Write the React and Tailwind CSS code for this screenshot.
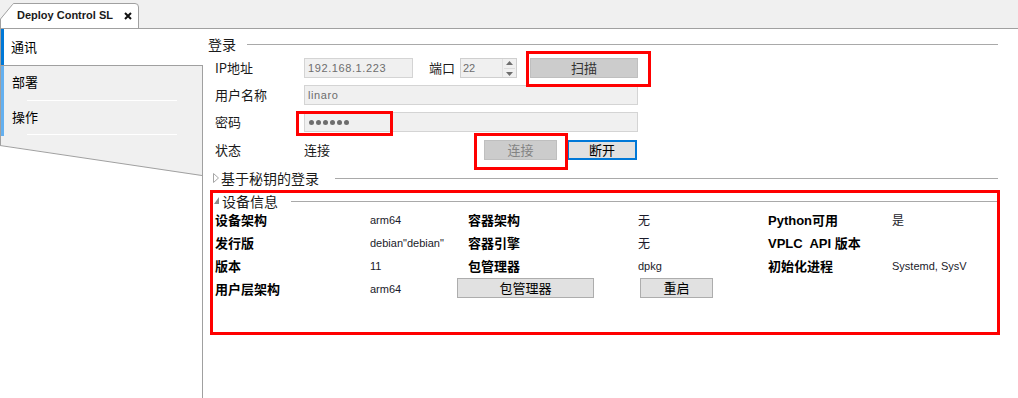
import clsx from 'clsx';

const cjk = "font-['Noto_Sans_CJK_SC','Liberation_Sans',sans-serif]";
const latin = "font-['Liberation_Sans','Noto_Sans_CJK_SC',sans-serif]";

function TopTab() {
  return (
    <div className="relative w-[140px] h-[25px] flex items-center">
      <svg className="absolute inset-0" width="140" height="25" viewBox="0 0 140 25">
        <path d="M0.5 25 L0.5 16 L12.5 1.5 Q13 0.5 14 0.5 L135 0.5 Q138.5 0.5 138.5 4 L138.5 25" fill="#ffffff" stroke="#a0a0a0" />
      </svg>
      <span className={clsx('relative pl-[17px] text-[11px] font-bold whitespace-nowrap text-[#1a1a1a]', latin)}>
        Deploy Control SL
      </span>
      <svg className="relative ml-[11px]" width="8" height="8" viewBox="0 0 8 8">
        <path d="M1 1 L7 7 M7 1 L1 7" stroke="#111" strokeWidth="2" />
      </svg>
    </div>
  );
}

function SideItem({ label, last }) {
  return (
    <div className="flex h-[35px] relative">
      <div className="w-[3px] bg-[#64b0f0]" />
      <div className={clsx('flex items-center pl-[8px] pb-[3px] text-[13px]', cjk)}>{label}</div>
      <div className={clsx('absolute left-[26px] w-[150px] h-px bg-white', last ? 'bottom-[1px]' : 'bottom-[0px]')} />
    </div>
  );
}

function Sidebar() {
  return (
    <div className="w-[203px] flex flex-col">
      <div className="h-[36px] flex border-l border-[#a0a0a0] bg-white">
        <div className="w-[3px] bg-[#0078d7]" />
        <div className={clsx('flex items-center pl-[7px] text-[13px]', cjk)}>通讯</div>
      </div>
      <div className="flex-1 flex flex-col border-r border-[#a0a0a0]">
        <div className="h-[80px] bg-[#f0f0f0] border-t border-l border-[#a0a0a0]">
          <SideItem label="部署" />
          <SideItem label="操作" last />
        </div>
        <svg width="202" height="32" viewBox="0 0 202 32">
          <polygon points="0,0 202,0 202,31" fill="#f0f0f0" />
          <line x1="0" y1="0.5" x2="202" y2="30.5" stroke="#a0a0a0" />
        </svg>
      </div>
    </div>
  );
}

function GroupHead({ title, marker, lineEnd }) {
  return (
    <div className="flex items-center h-[16px]">
      <div className="w-[9px] flex justify-start pl-[1px]">
        {marker === 'closed' && (
          <svg width="6" height="10" viewBox="0 0 6 10">
            <path d="M0.5 0.5 L5.5 5 L0.5 9.5 Z" fill="none" stroke="#a6a6a6" />
          </svg>
        )}
        {marker === 'open' && (
          <svg width="6" height="8" viewBox="0 0 6 8">
            <path d="M5 0 L5 7 L0 7 Z" fill="#8c8c8c" />
          </svg>
        )}
      </div>
      <span className={clsx('text-[14px] leading-[16px] text-[#1a1a1a]', cjk)}>{title}</span>
      <div className={clsx('flex-1 h-px bg-[#a9a9a9]', lineEnd)} />
    </div>
  );
}

function Field({ value, className, dots }) {
  return (
    <div
      className={clsx(
        'h-[20px] bg-[#f0f0f0] border border-[#d4d4d4] flex items-center pl-[3px] text-[11px] text-[#6d6d6d]',
        latin,
        className
      )}
    >
      {dots ? (
        <span className="flex gap-[2px] pl-[1px]">
          {[0, 1, 2, 3, 4, 5].map((i) => (
            <span key={i} className="w-[5px] h-[5px] rounded-full bg-[#6d6d6d]" />
          ))}
        </span>
      ) : (
        <span className="tracking-[0.6px]">{value}</span>
      )}
    </div>
  );
}

function Label({ children, className }) {
  return <div className={clsx('text-[13px] text-[#1a1a1a]', cjk, className)}>{children}</div>;
}

function Btn({ children, className }) {
  return (
    <div className={clsx('h-[20px] flex items-center justify-center text-[13px] border', cjk, className)}>
      {children}
    </div>
  );
}

function LoginForm() {
  return (
    <div className="pl-[12px] flex flex-col">
      <div className="flex items-center h-[20px] mt-[6px]">
        <Label className="w-[89px]">IP地址</Label>
        <Field value="192.168.1.223" className="w-[109px]" />
        <Label className="w-[31px] ml-[16px]">端口</Label>
        <div className="w-[57px] h-[20px] bg-[#f0f0f0] border border-[#cfcfcf] flex items-center">
          <span className={clsx('pl-[2px] flex-1 text-[11px] text-[#6d6d6d]', latin)}>22</span>
          <div className="w-[13px] h-full flex flex-col items-center justify-center gap-[3px] border-l border-[#e0e0e0] mr-[1px]">
            <svg width="7" height="4" viewBox="0 0 7 4">
              <path d="M0 4 L3.5 0 L7 4 Z" fill="#6e6e6e" />
            </svg>
            <div className="w-[11px] h-px bg-[#dcdcdc]" />
            <svg width="7" height="4" viewBox="0 0 7 4">
              <path d="M0 0 L3.5 4 L7 0 Z" fill="#6e6e6e" />
            </svg>
          </div>
        </div>
        <Btn className="w-[108px] ml-[13px] bg-[#cccccc] border-[#bfbfbf] text-[#333]">扫描</Btn>
      </div>
      <div className="flex items-center h-[20px] mt-[7px]">
        <Label className="w-[89px]">用户名称</Label>
        <Field value="linaro" className="w-[334px]" />
      </div>
      <div className="flex items-center h-[20px] mt-[7px]">
        <Label className="w-[89px]">密码</Label>
        <Field dots className="w-[334px]" />
      </div>
      <div className="flex items-center h-[20px] mt-[8px]">
        <Label className="w-[89px]">状态</Label>
        <Label className="w-[180px]">连接</Label>
        <Btn className="w-[73px] bg-[#cccccc] border-[#bfbfbf] text-[#838383]">连接</Btn>
        <Btn className="w-[70px] ml-[10px] bg-[#e1e1e1] border-2 border-[#0078d7] text-black">断开</Btn>
      </div>
    </div>
  );
}

const info = [
  ['设备架构', 'arm64', '容器架构', '无', 'Python可用', '是'],
  ['发行版', 'debian"debian"', '容器引擎', '无', 'VPLC  API 版本', ''],
  ['版本', '11', '包管理器', 'dpkg', '初始化进程', 'Systemd, SysV'],
];

function InfoGrid() {
  const bold = clsx('text-[13px] font-bold text-black whitespace-pre', latin);
  const val = clsx('text-[11px] text-[#1a1a2a]', latin);
  return (
    <div className="pl-[12px] grid grid-cols-[155px_98px_170px_130px_124px_1fr] auto-rows-[23px] items-center">
      {info.map((r) => (
        <div key={r[0]} className="contents">
          <div className={bold}>{r[0]}</div>
          <div className={val}>{r[1]}</div>
          <div className={bold}>{r[2]}</div>
          <div className={clsx(val, r[3] === '无' && 'text-[12px]')}>{r[3]}</div>
          <div className={bold}>{r[4]}</div>
          <div className={clsx(val, r[5] === '是' && 'text-[12px]')}>{r[5]}</div>
        </div>
      ))}
      <div className={bold}>用户层架构</div>
      <div className={val}>arm64</div>
      <div className="self-start">
        <Btn className="w-[137px] -ml-[11px] bg-[#e1e1e1] border-[#adadad] text-black">包管理器</Btn>
      </div>
      <div className="self-start">
        <Btn className="w-[73px] ml-[2px] bg-[#e1e1e1] border-[#adadad] text-black">重启</Btn>
      </div>
    </div>
  );
}

function Content() {
  return (
    <div className="flex-1 flex flex-col">
      <div className="mt-[7px] pl-[5px]">
        <div className="flex items-center h-[16px]">
          <span className={clsx('text-[14px] leading-[16px] text-[#1a1a1a]', cjk)}>登录</span>
          <div className="flex-1 h-px bg-[#a9a9a9] ml-[11px] mr-[20px]" />
        </div>
      </div>
      <LoginForm />
      <div className="mt-[10px] pl-[9px]">
        <GroupHead title="基于秘钥的登录" marker="closed" lineEnd="ml-[16px] mr-[20px]" />
      </div>
      <div className="mt-[7px] pl-[10px]">
        <GroupHead title="设备信息" marker="open" lineEnd="ml-[13px] mr-[18px]" />
      </div>
      <InfoGrid />
    </div>
  );
}

function RedBox({ className }) {
  return <div className={clsx('absolute border-[3px] border-[#ff0000] pointer-events-none', className)} />;
}

export default function App() {
  return (
    <div className="relative w-[1018px] h-[398px] overflow-hidden bg-white text-black">
      <div className="h-[29px] bg-[#f0f0f0] border-b border-[#a0a0a0] flex items-end">
        <TopTab />
      </div>
      <div className="flex h-[369px]">
        <Sidebar />
        <Content />
      </div>
      <RedBox className="left-[526px] top-[51px] w-[125px] h-[36px]" />
      <RedBox className="left-[296px] top-[111px] w-[97px] h-[25px]" />
      <RedBox className="left-[474px] top-[133px] w-[94px] h-[37px]" />
      <RedBox className="left-[210px] top-[190px] w-[790px] h-[145px]" />
    </div>
  );
}
